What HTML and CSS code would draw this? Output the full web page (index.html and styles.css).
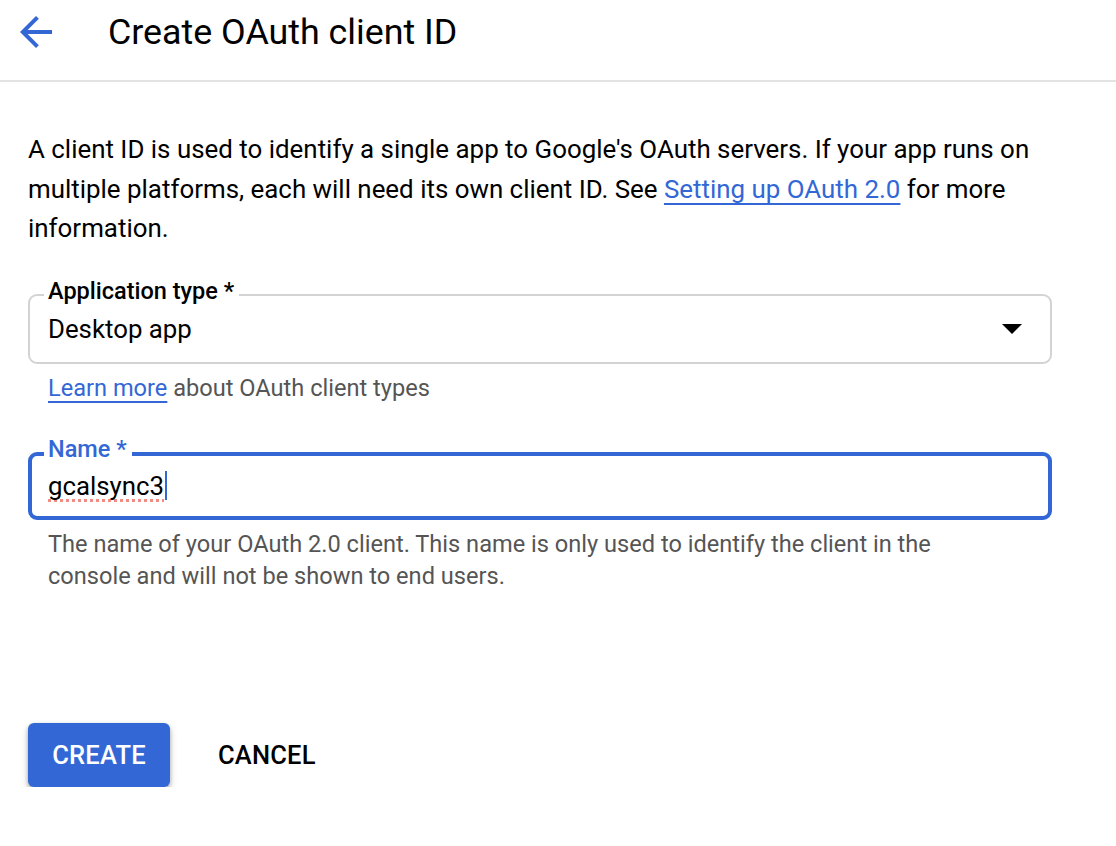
FILE: index.html
```html
<!DOCTYPE html>
<html lang="en">
<head>
<meta charset="utf-8">
<title>Create OAuth client ID</title>
<link rel="stylesheet" href="styles.css">
</head>
<body>
<header class="topbar">
  <button class="back" aria-label="Back">
    <svg viewBox="0 0 24 24" width="48" height="48"><path fill="#3367d6" d="M20 11H7.83l5.59-5.59L12 4l-8 8 8 8 1.41-1.41L7.83 13H20v-2z"/></svg>
  </button>
  <h1 class="title">Create OAuth client ID</h1>
</header>
<main class="content">
  <p class="intro">A client ID is used to identify a single app to Google's OAuth servers. If your app runs on multiple platforms, each will need its own client ID. See <a class="link" href="#">Setting up OAuth 2.0</a> for more information.</p>

  <div class="field select">
    <span class="label">Application type *</span>
    <span class="value">Desktop app</span>
    <span class="caret-down"></span>
  </div>
  <p class="hint"><a class="link" href="#">Learn more</a> about OAuth client types</p>

  <div class="field focused">
    <span class="label">Name *</span>
    <span class="value"><span class="misspelled">gcalsync3</span><span class="cursor"></span></span>
  </div>
  <p class="hint hint-multi">The name of your OAuth 2.0 client. This name is only used to identify the client in the console and will not be shown to end users.</p>

  <div class="actions">
    <button class="btn primary">CREATE</button>
    <button class="btn text">CANCEL</button>
  </div>
</main>
</body>
</html>
```
FILE: styles.css
```css
* { box-sizing: border-box; }
html, body { margin: 0; padding: 0; background: #fff; }
body {
  font-family: Roboto, "Noto Sans", Arial, sans-serif;
  color: #202124;
}
.topbar {
  height: 82px;
  border-bottom: 2px solid #e3e3e3;
  display: flex;
  align-items: flex-start;
  padding-left: 12px;
}
.back {
  border: 0;
  background: none;
  padding: 0;
  margin-top: 8px;
  width: 48px;
  height: 48px;
  display: flex;
}
.title {
  margin: 0 0 0 48px;
  font-size: 35.8px;
  font-weight: 400;
  line-height: 64px;
  color: #000;
}
.content {
  padding: 0 64px 0 28px;
  width: 1116px;
}
.intro {
  margin: 48px 0 0;
  font-size: 25.9px;
  line-height: 39.5px;
  color: #000;
}
.link {
  color: #3367d6;
  text-decoration: underline;
  text-underline-offset: 5px;
  text-decoration-thickness: 2px;
  text-decoration-skip-ink: none;
}
.field {
  position: relative;
  display: flex;
  align-items: center;
  justify-content: space-between;
  width: 1024px;
  border-radius: 9px;
}
.select {
  margin-top: 45px;
  height: 70px;
  border: 2px solid #d3d3d3;
  padding: 0 28px 0 18px;
}
.label {
  position: absolute;
  top: -19px;
  left: 14px;
  padding: 0 5px 0 4px;
  background: #fff;
  font-size: 23.5px;
  font-weight: 500;
  line-height: 28px;
  color: #000;
}
.value {
  font-size: 25.8px;
  color: #000;
  display: flex;
  align-items: center;
}
.caret-down {
  width: 0;
  height: 0;
  border-left: 10px solid transparent;
  border-right: 10px solid transparent;
  border-top: 10px solid #000;
}
.hint {
  margin: 8px 0 0 20px;
  font-size: 23.6px;
  line-height: 32px;
  color: #555;
}
.focused {
  margin-top: 48px;
  height: 68px;
  border: 4px solid #3367d6;
  padding: 0 16px;
}
.focused .label {
  color: #3367d6;
  top: -21px;
  left: 12px;
}
.misspelled {
  text-decoration: underline dotted #f28b82;
  text-decoration-thickness: 3px;
  text-underline-offset: 4px;
  text-decoration-skip-ink: none;
}
.cursor {
  display: inline-block;
  width: 2px;
  height: 29px;
  background: #3367d6;
  margin-left: 1px;
}
.hint-multi {
  margin-top: 8px;
  max-width: 960px;
}
.actions {
  margin-top: 131px;
  display: flex;
  align-items: center;
  gap: 24px;
}
.btn {
  font-family: Roboto, "Noto Sans", Arial, sans-serif;
  font-size: 25.5px;
  font-weight: 500;
  letter-spacing: 0.2px;
  border: 0;
  height: 64px;
  padding: 0 24px;
  border-radius: 6px;
  cursor: pointer;
}
.primary {
  background: #3367d6;
  color: #fff;
  width: 142px;
  padding: 0;
  box-shadow: 0 2px 4px rgba(0,0,0,0.28), 0 4px 8px rgba(0,0,0,0.14);
}
.text {
  background: none;
  color: #000;
}
```
